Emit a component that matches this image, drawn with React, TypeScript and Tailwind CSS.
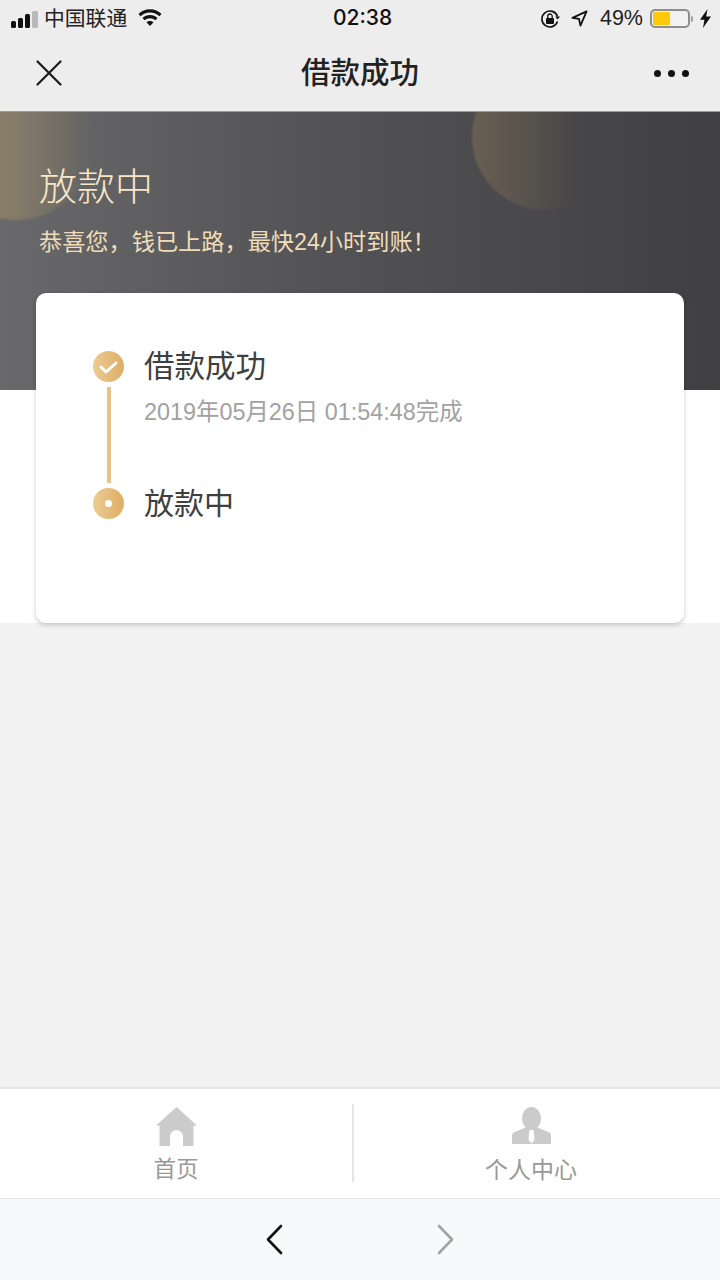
const cjk = "font-['Liberation_Sans','Noto_Sans_CJK_SC',sans-serif]";

function StatusBar() {
    return (
        <div className="h-10 flex items-center justify-between pl-[11px] pr-[9px] text-[#1a1a1a] relative">
            <div className="flex items-center pb-[2px]">
                <div className="flex items-end gap-[2px] h-[18px]">
                    <span className="w-[5px] h-[7px] rounded-[1.5px] bg-[#111]" />
                    <span className="w-[5px] h-[10px] rounded-[1.5px] bg-[#111]" />
                    <span className="w-[5px] h-[14px] rounded-[1.5px] bg-[#111]" />
                    <span className="w-[6px] h-[17px] rounded-[1.5px] bg-[#b9b9b9]" />
                </div>
                <span className="ml-[6px] text-[20.800px] leading-none text-[#222]">中国联通</span>
                <svg className="ml-[11px] mb-[2px]" width="24" height="18" viewBox="0 0 25 18">
                    <path d="M12.5 0C7.8 0 3.6 1.8.5 4.8l2.2 2.300C5.200 4.700 8.700 3.200 12.500 3.200s7.300 1.500 9.800 3.900l2.200-2.300C21.400 1.800 17.200 0 12.500 0z" fill="#111" />
                    <path d="M12.500 6c-3 0-5.800 1.200-7.800 3.100l2.200 2.300c1.500-1.400 3.400-2.200 5.600-2.200s4.100.8 5.600 2.200l2.200-2.300C18.300 7.200 15.500 6 12.500 6z" fill="#111" />
                    <path d="M12.500 12c-1.500 0-2.800.6-3.700 1.500l3.700 3.900 3.700-3.900c-.9-.9-2.200-1.500-3.700-1.500z" fill="#111" />
                </svg>
            </div>
            <span className="absolute left-[333px] top-[6px] font-['Inter',sans-serif] text-[21px] leading-[24px] font-medium text-[#111]">02:38</span>
            <div className="flex items-center pb-[3px]">
                <svg width="20" height="20" viewBox="0 0 20 20" fill="none">
                    <path d="M17.500 7.500A8 8 0 1 0 17.500 12.500" stroke="#111" strokeWidth="1.600" />
                    <path d="M15.200 7.500h4.800l-2.400 3z" fill="#111" />
                    <rect x="6" y="9" width="8" height="6" rx="1" fill="#111" />
                    <path d="M7.800 9V7.200a2.200 2.200 0 0 1 4.400 0V9" stroke="#111" strokeWidth="1.300" />
                </svg>
                <svg className="ml-[11px]" width="17" height="17" viewBox="0 0 18 18" fill="none">
                    <path d="M16.500 1.500 1.500 8.300l7 1.200 1.500 7z" stroke="#111" strokeWidth="1.900" strokeLinejoin="round" />
                </svg>
                <span className="ml-[12px] text-[21.500px] leading-none text-[#222]">49%</span>
                <div className="ml-[7px] w-[40px] h-[19px] rounded-[5px] border-2 border-[#8e8e8e] p-[1px] bg-[#f1f1f1]">
                    <div className="w-[17px] h-full bg-[#fdc90a] rounded-[1px]" />
                </div>
                <span className="ml-[1px] w-[2px] h-[6px] rounded-r-full bg-[#999]" />
                <svg className="ml-[7px]" width="11" height="19" viewBox="0 0 11 19">
                    <path d="M7.500 0 0 10.800h4.400L3 19l8-11.500H6.200z" fill="#111" />
                </svg>
            </div>
        </div>
    );
}

function NavBar() {
    return (
        <div className="h-[71px] relative flex items-center justify-between pl-[36px] pr-[31px] pb-[5px]">
            <svg width="26" height="26" viewBox="0 0 26 26" fill="none">
                <path d="M1.500 1.500l23 23M24.500 1.500l-23 23" stroke="#1a1a1a" strokeWidth="2.200" strokeLinecap="round" />
            </svg>
            <h1 className="absolute inset-x-0 top-[15px] text-center text-[29.500px] leading-[36px] font-medium text-[#222]">借款成功</h1>
            <div className="flex gap-[7px]">
                <span className="w-[7px] h-[7px] rounded-full bg-[#111]" />
                <span className="w-[7px] h-[7px] rounded-full bg-[#111]" />
                <span className="w-[7px] h-[7px] rounded-full bg-[#111]" />
            </div>
        </div>
    );
}

function Banner() {
    return (
        <div className="relative h-[279px] overflow-hidden bg-gradient-to-r from-[#69696b] via-[#555557] via-40% to-[#403f41] border-t border-[#9b9b9b] px-[39px] pt-[53px]">
            <div className="absolute -left-[62px] -top-[48px] w-[156px] h-[156px] rounded-full blur-[1px] bg-gradient-to-r from-[#8f8269] from-30% to-[#5e5d5e]/0" />
            <div className="absolute left-[472px] -top-[48px] w-[146px] h-[146px] rounded-full blur-[1px] bg-gradient-to-r from-[#695f52] to-[#4a494a]/0 to-70%" />
            <div className="relative">
                <h2 className="text-[38px] leading-[44px] font-light text-[#f8e6c6]">放款中</h2>
                <p className="mt-[19px] text-[23.200px] leading-[28px] text-[#f0dcb8]">恭喜您，钱已上路，最快24小时到账！</p>
            </div>
        </div>
    );
}

function Timeline() {
    return (
        <div className="relative z-10 mx-[36px] -mt-[97px] h-[330px] rounded-[10px] bg-white shadow-[0_2px_5px_rgba(0,0,0,0.2)] pl-[56px] pt-[50px]">
            <div className="flex gap-[20px]">
                <div className="flex flex-col items-center w-[32px]">
                    <div className="mt-[8px] w-[31px] h-[31px] rounded-full bg-gradient-to-r from-[#eccb93] to-[#deae65] flex items-center justify-center">
                        <svg width="19" height="14" viewBox="0 0 19 14" fill="none">
                            <path d="M2 7l5 5 10-9" stroke="#fff" strokeWidth="3" strokeLinecap="round" strokeLinejoin="round" />
                        </svg>
                    </div>
                    <div className="mt-[5px] ml-[1px] w-[4px] h-[96px] bg-[#e8c283]" />
                    <div className="mt-[5px] w-[31px] h-[31px] rounded-full bg-gradient-to-r from-[#eccb93] to-[#deae65] flex items-center justify-center">
                        <span className="w-[7px] h-[7px] rounded-full bg-white" />
                    </div>
                </div>
                <div className="pt-[1px]">
                    <p className="text-[30.500px] leading-[44px] text-[#3f3f3f]">借款成功</p>
                    <p className="mt-[10px] text-[23.400px] leading-[28px] text-[#a2a2a2]">2019年05月26日 01:54:48完成</p>
                    <p className="mt-[56px] text-[30px] leading-[44px] text-[#3f3f3f]">放款中</p>
                </div>
            </div>
        </div>
    );
}

function TabBar() {
    return (
        <div className="h-[111px] bg-white border-t-2 border-[#e6e6e6] flex items-start pt-[15px]">
            <div className="w-[354px] h-[78px] flex flex-col items-center border-r-2 border-[#e4e4e4]">
                <svg className="mt-[3px] shrink-0" width="41" height="39" viewBox="0 0 41 39">
                    <path d="M20.500 0 0 18.500h3.500V39H14V29.500a6.500 6.500 0 0 1 13 0V39h10.500V18.500H41z" fill="#cbcbcb" />
                </svg>
                <span className="mt-[10px] shrink-0 text-[22.500px] leading-[28px] text-[#989898]">首页</span>
            </div>
            <div className="w-[354px] h-[78px] flex flex-col items-center">
                <svg className="mt-[3px] shrink-0" width="39" height="37" viewBox="0 0 39 37">
                    <ellipse cx="19.500" cy="11.500" rx="9.500" ry="11.500" fill="#cbcbcb" />
                    <path d="M0 29c0-3 2-4 5-5l9-3.500h11l9 3.500c3 1 5 2 5 5v8H0z" fill="#cbcbcb" />
                    <path d="M17.500 23h4l1 10-3 3.500-3-3.500z" fill="#fff" />
                </svg>
                <span className="mt-[12px] shrink-0 text-[23px] leading-[28px] text-[#989898]">个人中心</span>
            </div>
        </div>
    );
}

export default function App() {
    return (
        <div className={`w-[720px] h-[1280px] flex flex-col overflow-hidden bg-[#f2f2f2] ${cjk}`}>
            <div className="bg-[#ededed]">
                <StatusBar />
                <NavBar />
            </div>
            <Banner />
            <div className="h-[233px] bg-white">
                <Timeline />
            </div>
            <div className="flex-1" />
            <TabBar />
            <div className="h-[82px] bg-[#f8f9fb] border-t border-[#e4e4e4] flex items-center">
                <svg className="ml-[265px]" width="18" height="31" viewBox="0 0 18 31" fill="none">
                    <path d="M16 2 3 15.500 16 29" stroke="#111" strokeWidth="2.600" strokeLinecap="round" strokeLinejoin="round" />
                </svg>
                <svg className="ml-[154px]" width="18" height="31" viewBox="0 0 18 31" fill="none">
                    <path d="M2 2l13 13.500L2 29" stroke="#a3a3a3" strokeWidth="2.600" strokeLinecap="round" strokeLinejoin="round" />
                </svg>
            </div>
        </div>
    );
}
